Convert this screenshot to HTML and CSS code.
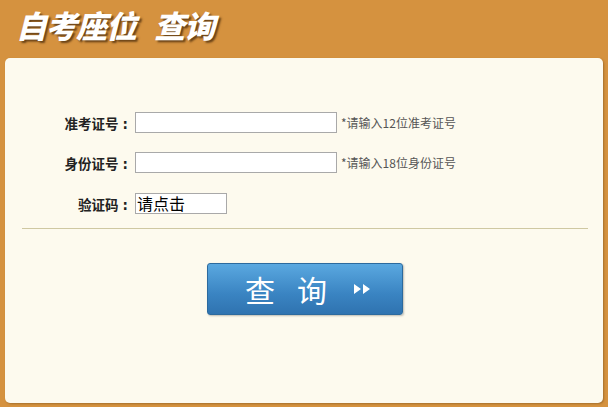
FILE: index.html
```html
<!DOCTYPE html>
<html lang="zh">
<head>
<meta charset="utf-8">
<title>自考座位 查询</title>
<link rel="stylesheet" href="styles.css">
</head>
<body>
<header class="header"><h1 class="title">自考座位&nbsp;&nbsp;&nbsp;查询</h1></header>
<main class="panel">
  <form class="form">
    <div class="row">
      <label class="label">准考证号<span class="colon">:</span></label>
      <input class="field" type="text">
      <span class="hint">*请输入12位准考证号</span>
    </div>
    <div class="row">
      <label class="label">身份证号<span class="colon">:</span></label>
      <input class="field" type="text">
      <span class="hint">*请输入18位身份证号</span>
    </div>
    <div class="row row-last">
      <label class="label">验证码<span class="colon">:</span></label>
      <span class="captcha">请点击</span>
    </div>
  </form>
  <hr class="divider">
  <div class="actions">
    <button class="submit" type="button"><span class="submit-text">查询</span><svg class="arrows" width="20" height="14" viewBox="0 0 20 14"><path d="M2 2 L9 7 L2 12 Z M11 2 L18 7 L11 12 Z" fill="#fff"/></svg></button>
  </div>
</main>
</body>
</html>
```
FILE: styles.css
```css
html, body {
  margin: 0;
  padding: 0;
}
body {
  background: #D5923F;
  font-family: "Noto Sans CJK SC", "Noto Sans", sans-serif;
  width: 608px;
  height: 407px;
  overflow: hidden;
}
.header {
  height: 58px;
  box-sizing: border-box;
  padding: 5px 0 0 16px;
}
.title {
  margin: 0;
  color: #fff;
  font-size: 31px;
  line-height: 40px;
  font-weight: 900;
  font-style: italic;
  letter-spacing: -1px;
  text-shadow: 2px 2px 2px rgba(70, 40, 10, 0.75);
}
.panel {
  margin: 0 5px;
  height: 345px;
  box-sizing: border-box;
  background: #FDFAEE;
  border-radius: 5px;
  box-shadow: 1px 1px 2px rgba(120, 80, 30, 0.5);
  padding-top: 54px;
}
.form {
  display: flex;
  flex-direction: column;
  gap: 19px;
}
.row {
  display: flex;
  align-items: center;
  height: 21px;
}
.row-last {
  margin-top: 1px;
}
.label {
  flex: none;
  width: 130px;
  box-sizing: border-box;
  text-align: right;
  font-size: 13.5px;
  font-weight: 700;
  color: #222;
}
.colon {
  display: inline-block;
  margin: 0 7px 0 4px;
  font-family: "DejaVu Sans", sans-serif;
  font-weight: 700;
}
.field {
  width: 202px;
  height: 21px;
  box-sizing: border-box;
  border: 1px solid #A9A9A9;
  background: #fff;
  margin: 0;
  padding: 0 2px;
}
.hint {
  margin-left: 4px;
  font-size: 12px;
  color: #555;
}
.captcha {
  width: 92px;
  height: 21px;
  box-sizing: border-box;
  border: 1px solid #A9A9A9;
  background: #fff;
  font-size: 16px;
  line-height: 18px;
  padding-left: 1px;
  color: #000;
  white-space: nowrap;
}
.divider {
  border: 0;
  border-top: 1px solid #CFC8A2;
  margin: 14px 15px 0 17px;
  height: 0;
}
.actions {
  display: flex;
  justify-content: center;
  padding-top: 34px;
  padding-left: 2px;
}
.submit {
  width: 196px;
  height: 52px;
  border: 1px solid #2C6A9E;
  border-radius: 3px;
  background: linear-gradient(#5AA8E0, #3A84C2 60%, #2F73B0);
  box-shadow: 1px 1px 2px rgba(0, 0, 0, 0.25);
  display: flex;
  align-items: center;
  justify-content: center;
  padding: 0 0 0 7px;
  gap: 3px;
  cursor: pointer;
}
.submit-text {
  color: #fff;
  font-family: "Noto Sans CJK SC", sans-serif;
  font-size: 30px;
  font-weight: 400;
  line-height: 1;
  letter-spacing: 22px;
}
.arrows {
  display: block;
}
```
